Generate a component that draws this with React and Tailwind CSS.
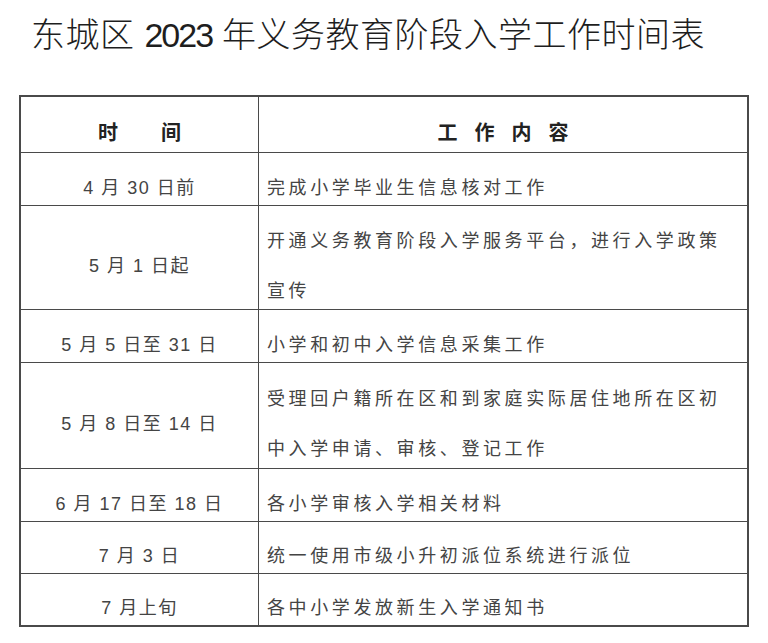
import React from 'react';

const rows = [
  { date: '4 月 30 日前', text: ['完成小学毕业生信息核对工作'], h: 'h-[53px]' },
  { date: '5 月 1 日起', text: ['开通义务教育阶段入学服务平台，进行入学政策', '宣传'], h: 'h-[104px]' },
  { date: '5 月 5 日至 31 日', text: ['小学和初中入学信息采集工作'], h: 'h-[53px]' },
  { date: '5 月 8 日至 14 日', text: ['受理回户籍所在区和到家庭实际居住地所在区初', '中入学申请、审核、登记工作'], h: 'h-[106px]' },
  { date: '6 月 17 日至 18 日', text: ['各小学审核入学相关材料'], h: 'h-[53px]' },
  { date: '7 月 3 日', text: ['统一使用市级小升初派位系统进行派位'], h: 'h-[52px]' },
  { date: '7 月上旬', text: ['各中小学发放新生入学通知书'], h: 'h-[52px]' },
];

const font = "font-['Liberation_Sans','Noto_Sans_CJK_SC',sans-serif]";

const App = () => (
  <div className={`w-[768px] h-[643px] bg-white overflow-hidden ${font}`}>
    <h1 className="pt-[18px] pl-[31px] text-[34px] leading-[34px] tracking-[0.5px] font-light text-[#1e1e1e]">
      东城区 <span className="tracking-[-2px] font-normal">2023</span> 年义务教育阶段入学工作时间表
    </h1>

    <div className="mt-[43px] ml-[19px] w-[730px] border-2 border-[#4a4a4a]">
      <div className="flex h-[55px]">
        <div className="w-[238px] flex items-center justify-center gap-[43px] pt-[17px] leading-[50px] text-[20px] font-bold text-[#222] border-r border-[#4a4a4a]">
          <span>时</span>
          <span>间</span>
        </div>
        <div className="flex-1 flex items-center justify-center gap-[17px] pt-[17px] leading-[50px] text-[20px] font-bold text-[#222]">
          <span>工</span>
          <span>作</span>
          <span>内</span>
          <span>容</span>
        </div>
      </div>

      {rows.map((r) => (
        <div key={r.date} className={`flex border-t border-[#4a4a4a] ${r.h}`}>
          <div className="w-[238px] flex items-center justify-center pt-[17px] leading-[50px] text-[18px] tracking-[1.5px] text-[#444] border-r border-[#4a4a4a]">
            <span className="whitespace-nowrap">{r.date}</span>
          </div>
          <div className="flex-1 flex items-center pt-[17px] pl-[8px] leading-[50px] text-[18px] tracking-[3.6px] text-[#444]">
            <div>
              {r.text.map((t) => (
                <div key={t} className="whitespace-nowrap">{t}</div>
              ))}
            </div>
          </div>
        </div>
      ))}
    </div>
  </div>
);

export default App;
